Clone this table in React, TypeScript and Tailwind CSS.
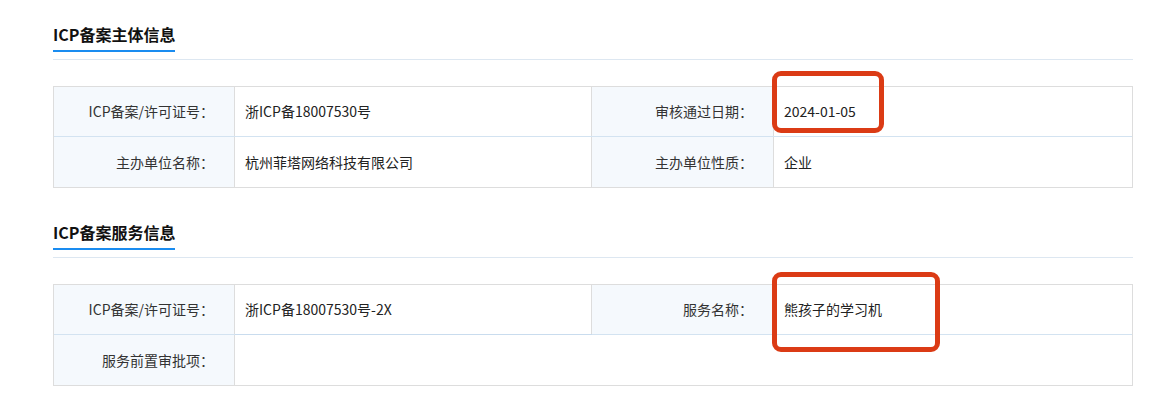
import React from 'react';

type Cell = { label: string; value?: string };

const font = { fontFamily: '"Noto Sans CJK SC", "Noto Sans", sans-serif' };

const sections: { title: string; rows: [Cell, Cell][] }[] = [
  {
    title: 'ICP备案主体信息',
    rows: [
      [
        { label: 'ICP备案/许可证号：', value: '浙ICP备18007530号' },
        { label: '审核通过日期：', value: '2024-01-05' },
      ],
      [
        { label: '主办单位名称：', value: '杭州菲塔网络科技有限公司' },
        { label: '主办单位性质：', value: '企业' },
      ],
    ],
  },
  {
    title: 'ICP备案服务信息',
    rows: [
      [
        { label: 'ICP备案/许可证号：', value: '浙ICP备18007530号-2X' },
        { label: '服务名称：', value: '熊孩子的学习机' },
      ],
      [{ label: '服务前置审批项：' }, { label: '' }],
    ],
  },
];

const Label = ({ text, width }: { text: string; width: string }) => (
  <div
    className={`${width} flex shrink-0 items-center justify-end border-r border-[#dddddd] bg-[#f5f9fd] pr-[20px] text-[14px] text-[#333333]`}
  >
    {text}
  </div>
);

function InfoTable({ rows }: { rows: [Cell, Cell][] }) {
  return (
    <div className="border border-[#dddddd]">
      {rows.map((row, i) => {
        const last = i === rows.length - 1;
        const merged = row[1].label === '';
        return (
          <div
            key={i}
            className={`flex h-[50px] ${last ? 'h-[49px]' : 'border-b border-[#d3e3f1]'}`}
          >
            <Label text={row[0].label} width="w-[181px]" />
            {merged ? (
              <div className="flex-1" />
            ) : (
              <>
                <div
                  className={`flex w-[357px] shrink-0 items-center border-r border-[#dddddd] pl-[10px] text-[14px] text-[#222222] ${
                    i === 0 && rows[1][1].label === '' ? 'shadow-[0_1px_0_0_#c9dcee]' : ''
                  }`}
                >
                  {row[0].value}
                </div>
                <Label text={row[1].label} width="w-[182px]" />
                <div className="flex flex-1 items-center pl-[10px] text-[14px] text-[#222222]">
                  {row[1].value}
                </div>
              </>
            )}
          </div>
        );
      })}
    </div>
  );
}

export default function App() {
  return (
    <div className="relative h-[394px] w-[1150px] bg-white pl-[53px] pr-[17px]" style={font}>
      {sections.map((s, i) => (
        <section key={s.title} className={i === 0 ? 'pt-[22px]' : 'pt-[32px]'}>
          <div className="mb-[26px] border-b border-[#dde7f1] pb-[7px]">
            <span className="inline-block border-b-2 border-[#1a8cf0] pb-[4px] text-[16px] leading-[24px] font-bold text-[#111111]">
              {s.title}
            </span>
          </div>
          <InfoTable rows={s.rows} />
        </section>
      ))}

      {/* annotation boxes */}
      <div className="pointer-events-none absolute top-[71px] left-[772px] h-[62px] w-[112px] rounded-[9px] border-[5px] border-[#db3b15]" />
      <div className="pointer-events-none absolute top-[272px] left-[772px] h-[80px] w-[168px] rounded-[9px] border-[5px] border-[#db3b15]" />
    </div>
  );
}
